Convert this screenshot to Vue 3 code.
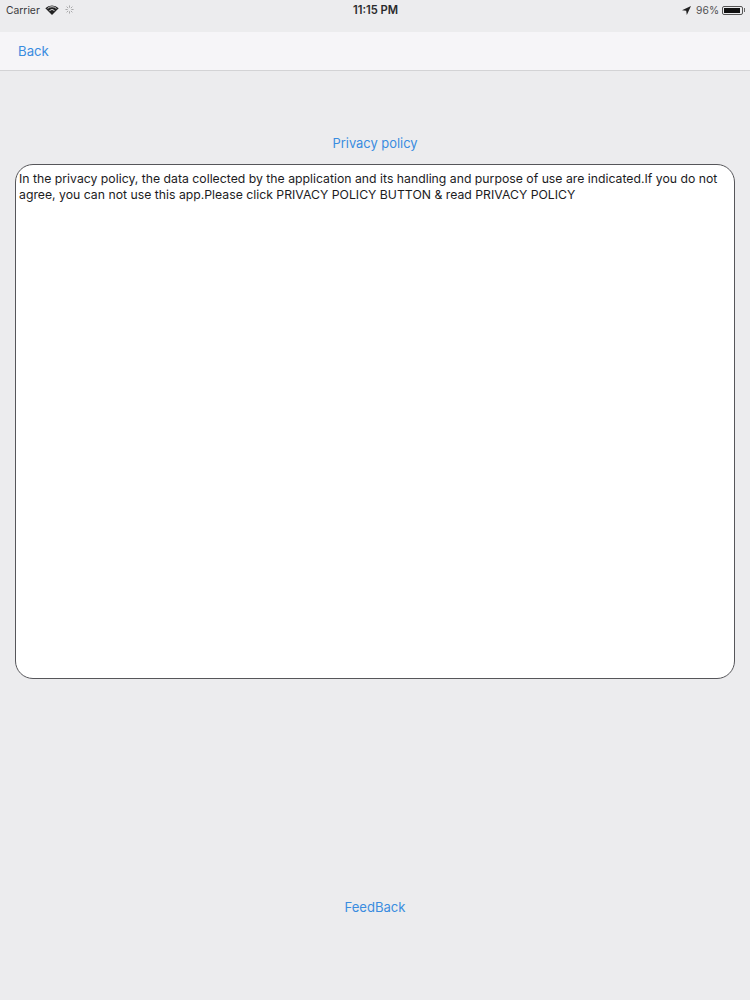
<script setup>
const title = 'Privacy policy'
const bodyText = 'In the privacy policy, the data collected by the application and its handling and purpose of use are indicated.If you do not agree, you can not use this app.Please click PRIVACY POLICY BUTTON & read PRIVACY POLICY'
</script>

<template>
  <div class="page">
    <div class="status">
      <div class="status-left">
        <span>Carrier</span>
        <svg class="wifi" width="14" height="10" viewBox="0 0 14 10">
          <path d="M7 10 L0.3 3.2 A9.6 9.6 0 0 1 13.7 3.2 Z" fill="#222" />
          <path d="M2.6 3.4 A6.6 6.6 0 0 1 11.4 3.4" fill="none" stroke="#ececee" stroke-width="0.9" />
          <path d="M4.5 5.6 A3.6 3.6 0 0 1 9.5 5.6" fill="none" stroke="#ececee" stroke-width="0.9" />
        </svg>
        <svg class="spin" width="9" height="9" viewBox="0 0 10 10" stroke="#a0a0a2" stroke-width="1">
          <path d="M5 0.5V3M5 7V9.5M0.5 5H3M7 5H9.5M1.8 1.8L3.5 3.5M6.5 6.5L8.2 8.2M1.8 8.2L3.5 6.5M6.5 3.5L8.2 1.8" />
        </svg>
      </div>
      <div class="status-time">11:15 PM</div>
      <div class="status-right">
        <svg width="9" height="9" viewBox="0 0 9 9"><path d="M9 0 L0 4.2 L4.2 4.8 L4.8 9 Z" fill="#222" /></svg>
        <span class="pct">96%</span>
        <div class="battery"><div class="charge"></div></div>
        <div class="nub"></div>
      </div>
    </div>

    <div class="navbar"><span class="link">Back</span></div>

    <div class="title link">{{ title }}</div>

    <div class="textbox">{{ bodyText }}</div>

    <div class="feedback link">FeedBack</div>
  </div>
</template>

<style>
html, body { margin: 0; background: #ececee; }
</style>

<style scoped>
.page {
  width: 750px;
  height: 1000px;
  box-sizing: border-box;
  background: #ececee;
  display: flex;
  flex-direction: column;
  font-family: Inter, "Liberation Sans", sans-serif;
  overflow: hidden;
}
.status {
  height: 32px;
  display: grid;
  grid-template-columns: 1fr auto 1fr;
  align-items: start;
  padding: 3px 5px 0 6px;
  box-sizing: border-box;
  font-size: 10.3px;
  line-height: 14px;
  color: #3a3a3c;
}
.status-left { display: flex; align-items: center; gap: 5px; }
.wifi { margin-top: -1px; }
.spin { margin-left: 1px; margin-top: -2px; }
.status-time { font-weight: 600; color: #2a2a2c; font-size: 11.2px; }
.status-right { display: flex; justify-content: flex-end; align-items: center; }
.pct { margin-left: 5px; color: #505052; }
.battery {
  width: 21px;
  height: 9px;
  margin-left: 3px;
  border: 1px solid #555;
  border-radius: 2px;
  box-sizing: border-box;
  padding: 1px;
}
.charge { width: 92%; height: 100%; background: #111; }
.nub { width: 1px; height: 4px; background: #666; margin-left: 1px; }
.navbar {
  height: 39px;
  box-sizing: border-box;
  background: #f6f5f8;
  border-bottom: 1px solid #d3d3d5;
  padding: 0 0 0 18px;
  display: flex;
  align-items: center;
  font-size: 13.2px;
}
.link { color: #3a8ce0; }
.title {
  margin-top: 64px;
  text-align: center;
  font-size: 12.9px;
  line-height: 18px;
}
.textbox {
  margin: 11px 15px 0;
  height: 515px;
  box-sizing: border-box;
  background: #fff;
  border: 1px solid #56565a;
  border-radius: 18px;
  padding: 6px 3px 0;
  font-size: 12.26px;
  line-height: 16px;
  color: #1c1c1e;
}
.feedback {
  margin-top: 219px;
  text-align: center;
  font-size: 13.1px;
  line-height: 18px;
}
</style>
